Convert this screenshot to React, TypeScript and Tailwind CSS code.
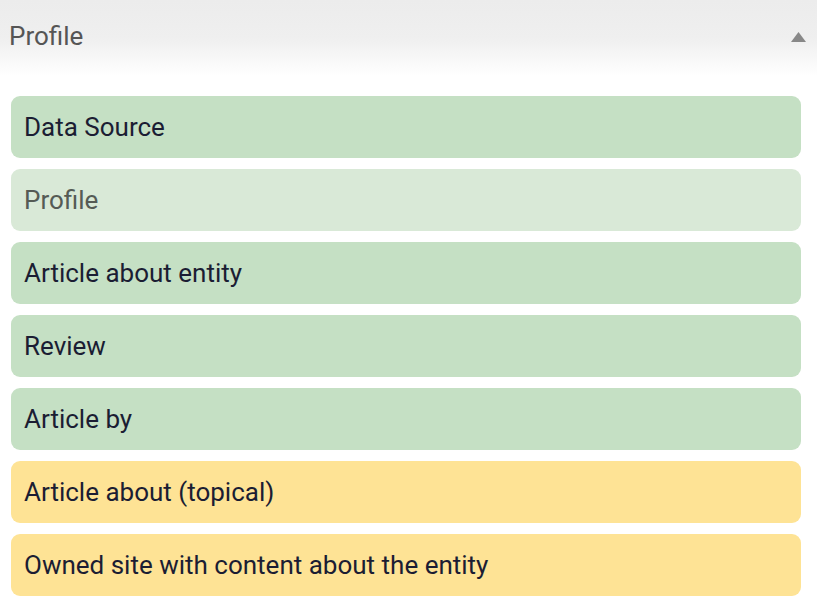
export default function App() {
  const rows = [
    { label: 'Data Source', cls: 'bg-[#c5e0c4] text-[#1b1d33]' },
    { label: 'Profile', cls: 'bg-[#d9e9d7] text-[#555b55]' },
    { label: 'Article about entity', cls: 'bg-[#c5e0c4] text-[#1b1d33]' },
    { label: 'Review', cls: 'bg-[#c5e0c4] text-[#1b1d33]' },
    { label: 'Article by', cls: 'bg-[#c5e0c4] text-[#1b1d33]' },
    { label: 'Article about (topical)', cls: 'bg-[#fee395] text-[#1b1d33]' },
    { label: 'Owned site with content about the entity', cls: 'bg-[#fee395] text-[#1b1d33]' },
  ]
  return (
    <div className="w-[817px] h-[600px] overflow-hidden bg-white font-['Roboto',sans-serif]">
      <div className="h-[76px] flex items-start justify-between pl-[9px] pr-[11px] pt-[20px] bg-gradient-to-b from-[#ececec] via-[#efefef] to-white">
        <span className="text-[26px] leading-[32px] text-[#555]">Profile</span>
        <svg width="15" height="10" viewBox="0 0 15 10" className="mt-[12px]">
          <polygon points="7.5,0 15,10 0,10" fill="#888" />
        </svg>
      </div>
      <div className="flex flex-col gap-[11px] pl-[11px] pr-[16px] pt-[20px]">
        {rows.map((r) => (
          <div key={r.label} className={`h-[62px] rounded-[9px] flex items-center pl-[13px] text-[26px] ${r.cls}`}>
            {r.label}
          </div>
        ))}
      </div>
    </div>
  )
}
